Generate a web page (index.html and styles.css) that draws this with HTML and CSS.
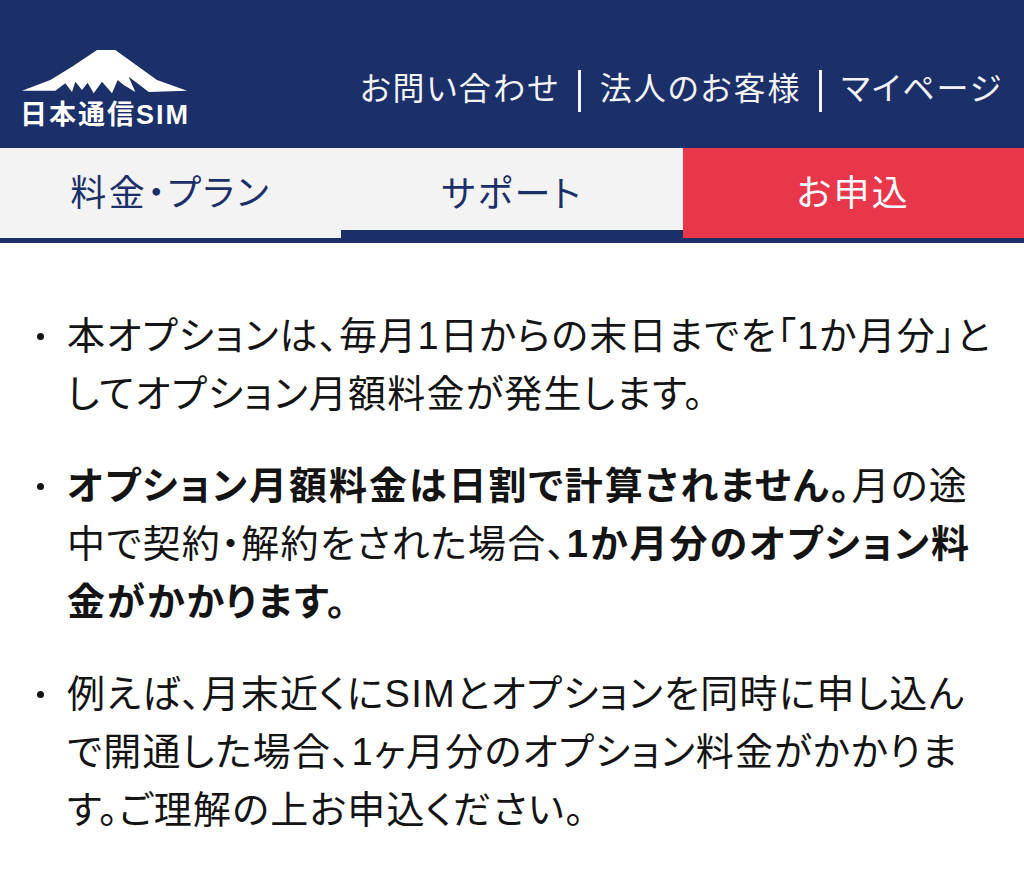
FILE: index.html
```html
<!DOCTYPE html>
<html lang="ja">
<head>
<meta charset="utf-8">
<title>日本通信SIM</title>
<link rel="stylesheet" href="styles.css">
</head>
<body>
<header class="header">
  <div class="logo">
    <svg class="logo-mark" viewBox="65 60 495 132" width="165" height="44" aria-hidden="true">
      <path fill="#fff" d="M65 182 L150 150 L215 110 L290 60 L345 60 L400 100 L470 150 L560 182 L445 186 L418 165 L385 140 L405 186 L370 165 L352 150 L335 190 L305 155 L280 190 L262 158 L245 180 L225 155 L215 186 L195 160 L165 182 Z"/>
    </svg>
    <div class="logo-text">日本通信SIM</div>
  </div>
  <nav class="util">
    <a class="util-link">お問い合わせ</a>
    <a class="util-link">法人のお客様</a>
    <a class="util-link">マイページ</a>
  </nav>
</header>
<nav class="tabs">
  <a class="tab">料金・プラン</a>
  <a class="tab tab-current">サポート</a>
  <a class="tab tab-apply">お申込</a>
</nav>
<main class="content">
  <ul class="notes">
    <li>本オプションは、毎月1日からの末日までを「1か月分」としてオプション月額料金が発生します。</li>
    <li><strong>オプション月額料金は日割で計算されません。</strong>月の途中で契約・解約をされた場合、<strong>1か月分のオプション料金がかかります。</strong></li>
    <li>例えば、月末近くにSIMとオプションを同時に申し込んで開通した場合、1ヶ月分のオプション料金がかかります。ご理解の上お申込ください。</li>
  </ul>
</main>
</body>
</html>
```
FILE: styles.css
```css
* { box-sizing: border-box; }
html, body { margin: 0; padding: 0; }
body {
  width: 1024px;
  height: 896px;
  overflow: hidden;
  background: #fff;
  color: #141414;
  font-family: "Liberation Sans", "Noto Sans CJK JP", sans-serif;
  font-feature-settings: "palt";
}
.header {
  height: 148px;
  background: #1b2f69;
  display: flex;
  justify-content: space-between;
  align-items: flex-start;
  padding: 50px 21px 0 18px;
}
.logo { display: flex; flex-direction: column; width: 172px; }
.logo-mark { margin-left: 4px; display: block; }
.logo-text {
  color: #fff;
  font-feature-settings: normal;
  font-weight: 700;
  font-size: 27px;
  line-height: 30px;
  letter-spacing: 2px;
  margin-top: 6px;
  padding-left: 2px;
  white-space: nowrap;
}
.util { display: flex; align-items: center; margin-top: 20px; }
.util-link {
  color: #f2f3f6;
  font-size: 32px;
  line-height: 38px;
  letter-spacing: 2px;
  white-space: nowrap;
  padding: 0 18px 4px 19px;
  border-left: 3px solid #f2f3f6;
}
.util-link:first-child { border-left: 0; padding-left: 0; }
.util-link:last-child { padding-right: 0; }
.tabs {
  display: flex;
  height: 95px;
  background: #f3f3f4;
  border-bottom: 5px solid #1b2f69;
}
.tab {
  flex: 1 1 0;
  display: flex;
  align-items: center;
  justify-content: center;
  color: #1b2f69;
  font-size: 36px;
  letter-spacing: 2.4px;
  padding-bottom: 6px;
}
.tab-current { border-bottom: 8px solid #1b2f69; padding-bottom: 0; padding-top: 4px; }
.tab-apply { background: #e8374b; color: #fff; }
.content { padding: 64px 30px 0 36px; }
.notes { list-style: none; margin: 0; padding: 0; }
.notes li {
  position: relative;
  padding-left: 31px;
  font-size: 38px;
  letter-spacing: 1.25px;
  line-height: 58px;
  margin-bottom: 34px;
}
.notes li::before {
  content: "";
  position: absolute;
  left: 1px;
  top: 26px;
  width: 7px;
  height: 7px;
  border-radius: 50%;
  background: #141414;
}
.notes strong { font-weight: 700; letter-spacing: 2px; }
```
